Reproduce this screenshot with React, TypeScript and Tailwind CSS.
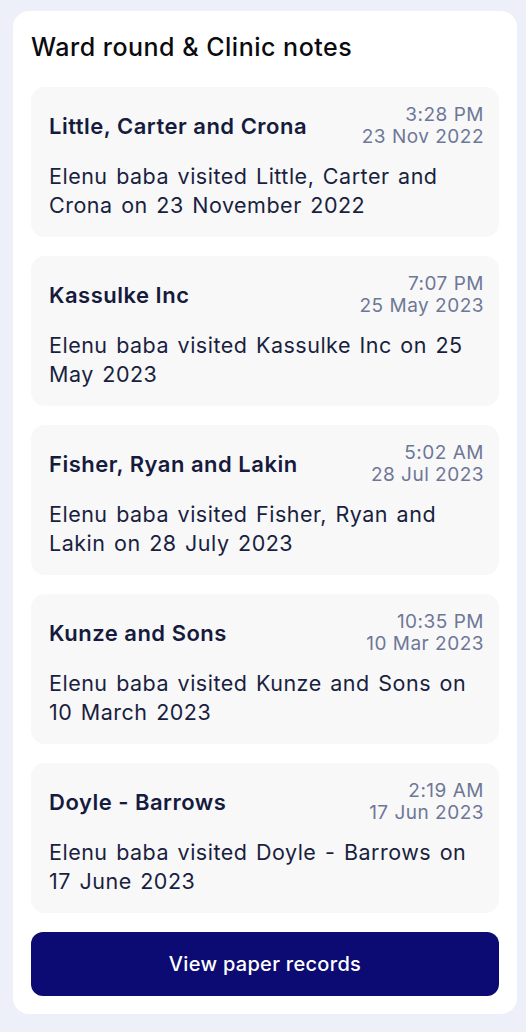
import React from "react";

type Note = {
  name: string;
  time: string;
  date: string;
  body: string;
};

const NOTES: Note[] = [
  {
    name: "Little, Carter and Crona",
    time: "3:28 PM",
    date: "23 Nov 2022",
    body: "Elenu baba visited Little, Carter and Crona on 23 November 2022",
  },
  {
    name: "Kassulke Inc",
    time: "7:07 PM",
    date: "25 May 2023",
    body: "Elenu baba visited Kassulke Inc on 25 May 2023",
  },
  {
    name: "Fisher, Ryan and Lakin",
    time: "5:02 AM",
    date: "28 Jul 2023",
    body: "Elenu baba visited Fisher, Ryan and Lakin on 28 July 2023",
  },
  {
    name: "Kunze and Sons",
    time: "10:35 PM",
    date: "10 Mar 2023",
    body: "Elenu baba visited Kunze and Sons on 10 March 2023",
  },
  {
    name: "Doyle - Barrows",
    time: "2:19 AM",
    date: "17 Jun 2023",
    body: "Elenu baba visited Doyle - Barrows on 17 June 2023",
  },
];

function NoteCard({ note }: { note: Note }) {
  return (
    <div className="flex h-[150px] flex-col rounded-[14px] bg-[#f8f8f9] pl-[18px] pr-[15px] pt-[17px]">
      <div className="flex items-center justify-between">
        <p className="text-[22px] font-semibold tracking-[0.5px] text-[#161b3d]">
          {note.name}
        </p>
        <div className="text-right text-[19px] leading-[22px] tracking-[0.5px] text-[#6e7796]">
          <p>{note.time}</p>
          <p>{note.date}</p>
        </div>
      </div>
      <p className="mt-[14px] pr-[2px] text-[21.5px] leading-[29px] tracking-[0.5px] text-[#1a1f3f] [word-spacing:2px]">
        {note.body}
      </p>
    </div>
  );
}

export default function App() {
  return (
    <div className="min-h-[1032px] bg-[#edf0f8] pt-[11px] font-['Inter',sans-serif]">
      <div className="ml-[13px] flex w-[504px] flex-col rounded-[16px] bg-white px-[18px] pb-[18px] pt-[21px]">
        <h1 className="text-[25px] font-medium leading-[30px] tracking-[0.5px] text-[#0b0b0f]">
          Ward round &amp; Clinic notes
        </h1>
        <div className="mt-[25px] flex flex-col gap-[19px]">
          {NOTES.map((note) => (
            <NoteCard key={note.name} note={note} />
          ))}
        </div>
        <button className="mt-[19px] h-[64px] rounded-[12px] bg-[#0b0b73] text-[20px] font-medium tracking-[0.3px] text-white">
          View paper records
        </button>
      </div>
    </div>
  );
}
